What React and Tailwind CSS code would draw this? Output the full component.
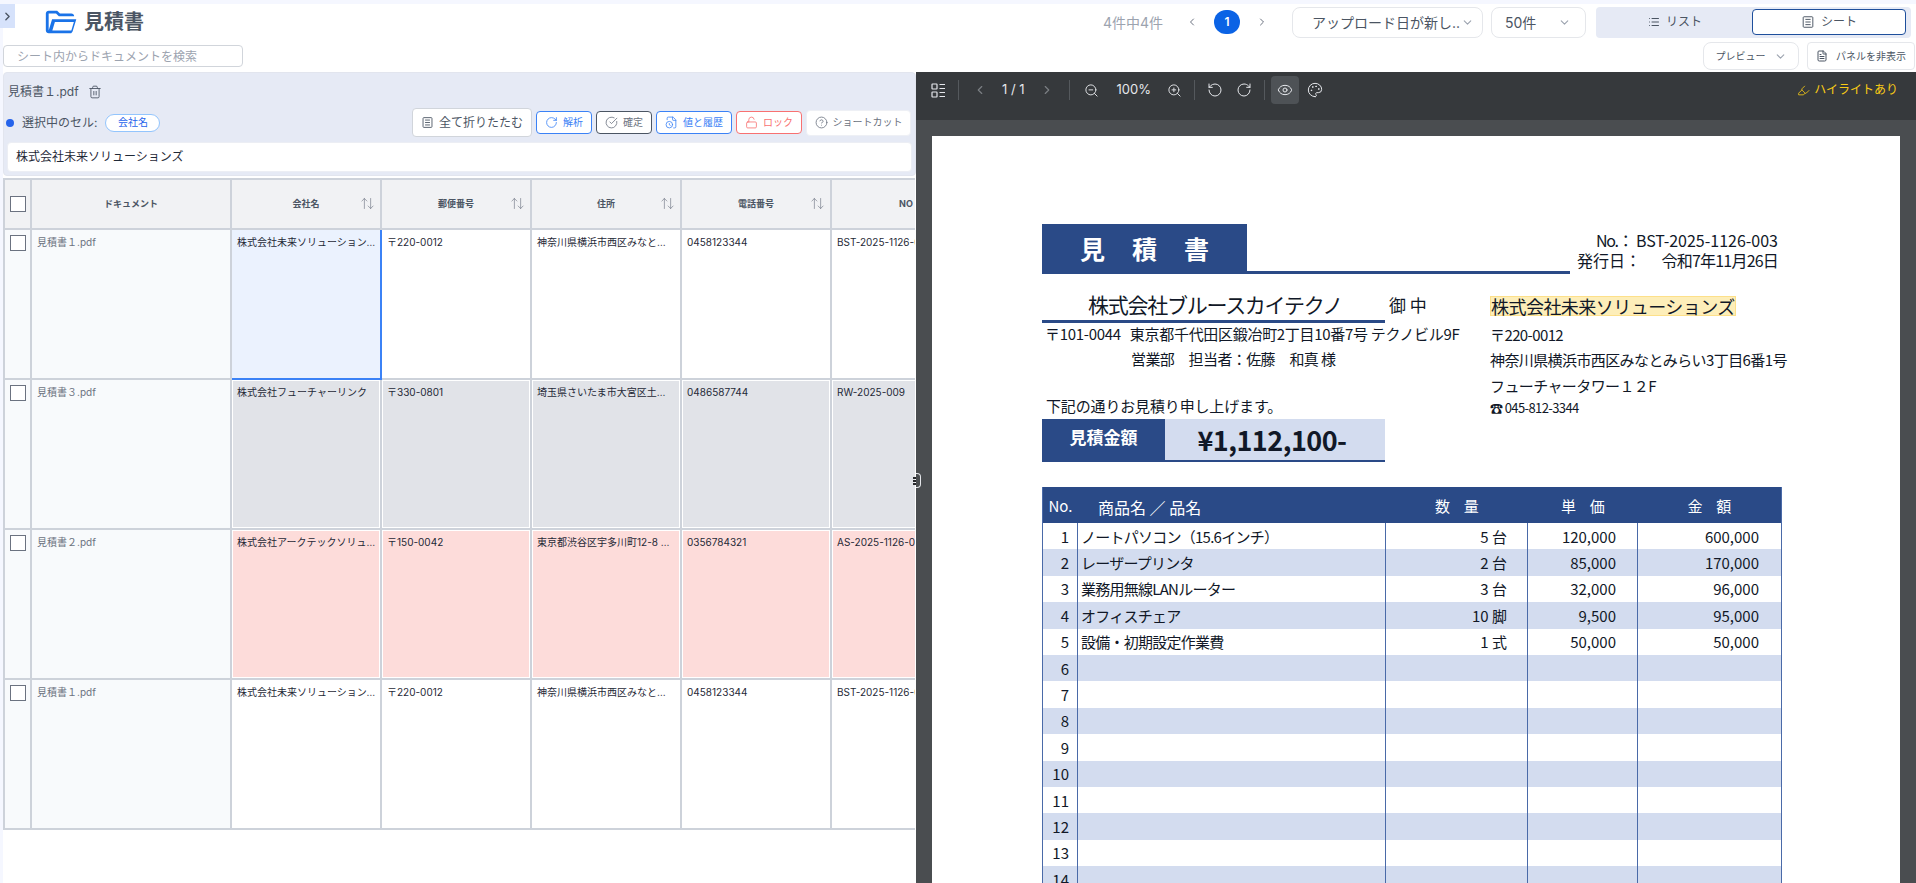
import React from 'react';
import {
  ArrowUpDown,
  ChevronDown,
  ChevronLeft,
  ChevronRight,
  CircleCheckBig,
  CircleHelp,
  Eye,
  FileClock,
  FileText,
  Highlighter,
  List,
  LockOpen,
  Palette,
  RotateCcw,
  RotateCw,
  Trash2,
  ZoomIn,
  ZoomOut,
} from 'lucide-react';

const columns = ['郵便番号', '住所', '電話番号'];

const rows = [
  {
    doc: '見積書１.pdf',
    cells: ['株式会社未来ソリューションズ', '〒220-0012', '神奈川県横浜市西区みなとみらい3丁目6番1号', '0458123344', 'BST-2025-1126-003'],
    bg: 'bg-white',
    selected: true,
  },
  {
    doc: '見積書３.pdf',
    cells: ['株式会社フューチャーリンク', '〒330-0801', '埼玉県さいたま市大宮区土呂町2丁目', '0486587744', 'RW-2025-009'],
    bg: 'bg-[#e1e3e8]',
  },
  {
    doc: '見積書２.pdf',
    cells: ['株式会社アークテックソリューションズ', '〒150-0042', '東京都渋谷区宇多川町12-8 アークビル', '0356784321', 'AS-2025-1126-001'],
    bg: 'bg-[#fddcda]',
  },
  {
    doc: '見積書１.pdf',
    cells: ['株式会社未来ソリューションズ', '〒220-0012', '神奈川県横浜市西区みなとみらい3丁目6番1号', '0458123344', 'BST-2025-1126-003'],
    bg: 'bg-white',
  },
];

const items = [
  ['1', 'ノートパソコン（15.6インチ）', '5 台', '120,000', '600,000'],
  ['2', 'レーザープリンタ', '2 台', '85,000', '170,000'],
  ['3', '業務用無線LANルーター', '3 台', '32,000', '96,000'],
  ['4', 'オフィスチェア', '10 脚', '9,500', '95,000'],
  ['5', '設備・初期設定作業費', '1 式', '50,000', '50,000'],
  ['6'], ['7'], ['8'], ['9'], ['10'], ['11'], ['12'], ['13'], ['14'],
];

function FolderLogo() {
  return (
    <svg width="34" height="34" viewBox="0 0 24 24" fill="#1a73e8" className="shrink-0">
      <path d="M4 20q-.825 0-1.412-.587T2 18V6q0-.825.588-1.412T4 4h6l2 2h8q.825 0 1.413.588T22 8H11.175l-2-2H4v12l2.400-8h17.100l-2.575 8.575q-.2.65-.737 1.038T20 20H4Zm2.600-2H20l1.800-6H8.400l-1.800 6Z" />
    </svg>
  );
}

function SheetIcon({ className }) {
  return (
    <svg className={className} viewBox="0 0 16 16" fill="none" stroke="currentColor" strokeWidth="1.100">
      <rect x="2.500" y="2" width="11" height="12" rx="1" />
      <path d="M5 5h6M5 8h6M5 11h6" />
    </svg>
  );
}

function ThumbIcon() {
  return (
    <svg width="15" height="15" viewBox="0 0 15 15" fill="none" stroke="#e5e7eb" strokeWidth="1.200">
      <rect x="1" y="1" width="5" height="5" rx="0.500" />
      <rect x="1" y="9" width="5" height="5" rx="0.500" />
      <path d="M8.500 1.500H14M8.500 5.500H14M8.500 9.500H14M8.500 13.500H14" />
    </svg>
  );
}

function Checkbox() {
  return <div className="h-4 w-4 border border-[#6b7280] bg-white" />;
}

function ActionButton({ icon: Icon, label, className }) {
  return (
    <button className={`flex h-[23px] items-center justify-center gap-[5px] rounded border bg-white text-[10px] ${className}`}>
      <Icon size={13} strokeWidth={1.500} />
      {label}
    </button>
  );
}

function TopBar() {
  return (
    <div className="flex h-[36px] items-center pl-[40px] pr-[5px]">
      <FolderLogo />
      <h1 className="ml-[7px] text-[20px] font-bold text-[#4b5563]">見積書</h1>
      <div className="ml-auto flex items-center">
        <span className="text-[14px] text-[#9ca3af]">4件中4件</span>
        <ChevronLeft size={12} className="ml-[23px] text-[#6b7280]" />
        <span className="ml-[16px] flex h-[24px] w-[26px] items-center justify-center rounded-full bg-[#0b63e5] text-[12px] font-semibold text-white">1</span>
        <ChevronRight size={12} className="ml-[16px] text-[#6b7280]" />
        <div className="ml-[24px] flex h-[31px] w-[191px] items-center justify-between rounded-lg border border-[#e5e7eb] pl-[19px] pr-[8px] text-[14px] text-[#4b5563]">
          <span>アップロード日が新し..</span>
          <ChevronDown size={13} className="text-[#9ca3af]" />
        </div>
        <div className="ml-[8px] flex h-[31px] w-[95px] items-center justify-between rounded-lg border border-[#e5e7eb] pl-[13px] pr-[14px] text-[14px] text-[#4b5563]">
          <span>50件</span>
          <ChevronDown size={13} className="text-[#9ca3af]" />
        </div>
        <div className="ml-[10px] flex h-[31px] w-[315px] items-center rounded bg-[#e6eaf5] pl-[2px] pr-[5px]">
          <div className="flex flex-1 items-center justify-center gap-[6px] text-[12px] text-[#4b5563]">
            <List size={12} />
            リスト
          </div>
          <div className="flex h-[26px] w-[154px] items-center justify-center gap-[6px] rounded border-[1.500px] border-[#1e4f9c] bg-white text-[12px] text-[#4b5563]">
            <SheetIcon className="h-[14px] w-[14px]" />
            シート
          </div>
        </div>
      </div>
    </div>
  );
}

function SubBar() {
  return (
    <div className="flex h-[32px] items-center pr-[1px]">
      <input
        className="h-[22px] w-[240px] rounded border border-[#d1d5db] pl-[13px] text-[12px] placeholder:text-[#9ca3af]"
        placeholder="シート内からドキュメントを検索"
      />
      <button className="ml-auto flex h-[28px] w-[96px] items-center justify-center gap-[8px] rounded-lg border border-[#e5e7eb] text-[10px] text-[#4b5563]">
        プレビュー
        <ChevronDown size={13} className="text-[#9ca3af]" />
      </button>
      <button className="ml-[8px] flex h-[28px] w-[108px] items-center justify-center gap-[8px] rounded border border-[#e5e7eb] text-[10px] text-[#4b5563]">
        <FileText size={12} />
        パネルを非表示
      </button>
    </div>
  );
}

function InfoCard() {
  return (
    <div className="h-[104px] rounded border border-[#e2e5ee] bg-[#e6eaf5]">
      <div className="flex h-[35px] items-center gap-[9px] pl-[4px] pt-[2px] text-[12px] text-[#4b5563]">
        見積書１.pdf
        <Trash2 size={14} strokeWidth={1.500} />
      </div>
      <div className="flex h-[29px] items-center pl-[2px] pr-[4px]">
        <span className="h-[8px] w-[8px] rounded-full bg-[#2563eb]" />
        <span className="ml-[8px] text-[12px] text-[#4b5563]">選択中のセル:</span>
        <span className="ml-[8px] flex h-[18px] w-[55px] items-center justify-center rounded-full border border-[#93c5fd] bg-white text-[10px] text-[#2563eb]">会社名</span>
        <button className="ml-auto flex h-[29px] w-[120px] items-center justify-center gap-[5px] rounded border border-[#d1d5db] bg-white text-[12px] text-[#4b5563]">
          <SheetIcon className="h-[13px] w-[13px]" />
          全て折りたたむ
        </button>
        <ActionButton icon={RotateCw} label="解析" className="ml-[4px] w-[56px] border-[#3b82f6] text-[#3b82f6]" />
        <ActionButton icon={CircleCheckBig} label="確定" className="ml-[4px] w-[56px] border-[#4b5563] text-[#6b7280]" />
        <ActionButton icon={FileClock} label="値と履歴" className="ml-[4px] w-[76px] border-[#3b82f6] text-[#3b82f6]" />
        <ActionButton icon={LockOpen} label="ロック" className="ml-[4px] w-[66px] border-[#f87171] text-[#f87171]" />
        <button className="ml-[4px] flex h-[26px] w-[105px] items-center justify-center gap-[5px] rounded border border-[#eef0f5] bg-white text-[10px] text-[#6b7280]">
          <CircleHelp size={13} strokeWidth={1.500} />
          ショートカット
        </button>
      </div>
      <div className="mx-[3px] mt-[5px] flex h-[30px] items-center rounded border border-[#eceef4] bg-white pl-[8px] text-[12px] text-[#1f2937]">
        株式会社未来ソリューションズ
      </div>
    </div>
  );
}

function HeaderCell({ label, sort, width }) {
  return (
    <div className={`relative flex shrink-0 items-center justify-center border-r-2 border-[#cdd2da] text-[9px] font-bold text-[#4b5563] ${width}`}>
      {label}
      {sort && <ArrowUpDown size={15} strokeWidth={1} className="absolute right-[5px] top-[16px] text-[#6b7280]" />}
    </div>
  );
}

function DataCell({ children, bg, selected, narrow }) {
  if (selected) {
    return (
      <div className="h-[150px] w-[150px] shrink-0 border-b-2 border-r-2 border-[#3b82f6] bg-[#ebf2fe]">
        <div className="truncate pl-[5px] pr-[4px] pt-[5px] text-[10px] text-[#1f2937]">{children}</div>
      </div>
    );
  }
  return (
    <div className="h-[150px] w-[150px] shrink-0 border-b-2 border-r-2 border-[#cdd2da] bg-white p-px">
      <div className={`h-full ${bg}`}>
        <div className={`truncate pl-[4px] pt-[4px] text-[10px] text-[#1f2937] ${narrow ? 'pr-[7px]' : 'pr-[3px]'}`}>{children}</div>
      </div>
    </div>
  );
}

function Sheet() {
  return (
    <div className="mt-[2px] w-[912px] overflow-hidden border-l-2 border-t-2 border-[#cdd2da]">
      <div className="flex h-[50px] border-b-2 border-[#cdd2da] bg-[#f1f2f4]">
        <div className="flex w-[27px] shrink-0 items-center justify-center border-r-2 border-[#cdd2da]">
          <Checkbox />
        </div>
        <HeaderCell label="ドキュメント" width="w-[200px]" />
        <HeaderCell label="会社名" sort width="w-[150px]" />
        {columns.map(c => (
          <HeaderCell key={c} label={c} sort width="w-[150px]" />
        ))}
        <HeaderCell label="NO" width="w-[150px]" />
      </div>
      {rows.map((row, i) => (
        <div key={i} className="flex h-[150px]">
          <div className="flex w-[27px] shrink-0 justify-center border-b-2 border-r-2 border-[#cdd2da] bg-[#f8fafc] pt-[5px]">
            <Checkbox />
          </div>
          <div className="w-[200px] shrink-0 truncate border-b-2 border-r-2 border-[#cdd2da] bg-[#f8fafc] pl-[5px] pt-[5px] text-[10px] text-[#6b7280]">
            {row.doc}
          </div>
          {row.cells.map((cell, j) => (
            <DataCell key={j} bg={row.bg} selected={row.selected && j === 0} narrow={j === 2}>
              {cell}
            </DataCell>
          ))}
        </div>
      ))}
    </div>
  );
}

function Toolbar() {
  return (
    <div className="flex h-[48px] shrink-0 items-start bg-[#36393c] pt-[4px] text-[#e5e7eb]">
      <div className="flex h-[28px] items-center">
        <div className="ml-[15px]"><ThumbIcon /></div>
        <span className="ml-[12px] h-[20px] w-px bg-[#55595d]" />
        <ChevronLeft size={14} className="ml-[14px] text-[#7b7f83]" />
        <span className="ml-[15px] text-[13px]">1 / 1</span>
        <ChevronRight size={14} className="ml-[15px] text-[#7b7f83]" />
        <span className="ml-[15px] h-[20px] w-px bg-[#55595d]" />
        <ZoomOut size={15} strokeWidth={1.500} className="ml-[14px]" />
        <span className="ml-[18px] text-[13px]">100%</span>
        <ZoomIn size={15} strokeWidth={1.500} className="ml-[16px]" />
        <span className="ml-[12px] h-[20px] w-px bg-[#55595d]" />
        <RotateCcw size={16} strokeWidth={1.500} className="ml-[12px]" />
        <RotateCw size={16} strokeWidth={1.500} className="ml-[13px]" />
        <span className="ml-[12px] h-[20px] w-px bg-[#55595d]" />
        <span className="ml-[6px] flex h-[28px] w-[28px] items-center justify-center rounded bg-[#4e5256]">
          <Eye size={16} strokeWidth={1.500} />
        </span>
        <Palette size={16} strokeWidth={1.500} className="ml-[8px]" />
      </div>
      <div className="ml-auto mr-[18px] flex h-[28px] items-center gap-[4px] text-[12px] text-[#facc15]">
        <Highlighter size={13} strokeWidth={1.500} />
        ハイライトあり
      </div>
    </div>
  );
}

function Quote() {
  return (
    <div className="h-[747px] overflow-hidden bg-white pl-[110px] pt-[88px] font-['Noto_Sans_CJK_JP',sans-serif] text-[#111827]">
      <div className="flex h-[50px] items-end">
        <div className="flex h-[50px] w-[205px] items-center justify-center bg-[#2a4a87] pl-[27px] text-[25px] font-bold tracking-[27px] text-white">見積書</div>
        <div className="h-[3px] w-[323px] bg-[#2a4a87]" />
        <div className="ml-[7px] w-[201px] whitespace-nowrap text-[16px] leading-[20px]">
          <div className="flex justify-between pl-[19px]"><span className="tracking-[-0.08em]">No.：</span><span>BST-2025-1126-003</span></div>
          <div className="mb-[4px] flex justify-between"><span>発行日：</span><span className="tracking-[-0.05em]">令和7年11月26日</span></div>
        </div>
      </div>
      <div className="flex">
        <div className="w-[448px]">
          <div className="flex">
            <div className="mt-[14px] h-[35px] w-[343px] border-b-[3px] border-[#2a4a87] pl-[46px] text-[21px] leading-[32px] tracking-[-0.06em]">株式会社ブルースカイテクノ</div>
            <div className="ml-[4px] mt-[18px] text-[17px]">御 中</div>
          </div>
          <div className="whitespace-nowrap pl-[3px] text-[15px] leading-[21px] tracking-[-0.02em]">〒101-0044 <span className="ml-[6px]">東京都千代田区鍛冶町2丁目10番7号 テクノビル9F</span></div>
          <div className="pl-[89px] text-[15px] leading-[29px] tracking-[-0.04em]">営業部　担当者：佐藤　和真 様</div>
          <div className="mt-[23px] pl-[4px] text-[15px] leading-[20px] tracking-[-0.01em]">下記の通りお見積り申し上げます。</div>
          <div className="mt-[3px] flex h-[43px] w-[343px]">
            <div className="flex h-full w-[123px] items-start justify-center bg-[#2a4a87] pt-[5px] text-[17px] font-bold text-white">見積金額</div>
            <div className="flex h-full w-[220px] items-center justify-center border-b-2 border-[#2a4a87] bg-[#d3dcef] pr-[6px] text-[27px] font-bold leading-none tracking-[-0.02em]">¥1,112,100-</div>
          </div>
        </div>
        <div className="pt-[22px] text-[15px] tracking-[-0.04em]">
          <div className="w-fit border border-[#fde08a] bg-[#fdeeb9] text-[18px] leading-[18px] tracking-[-0.03em]">株式会社未来ソリューションズ</div>
          <div className="mt-[7px] leading-[24px]">〒220-0012</div>
          <div className="whitespace-nowrap leading-[26px]">神奈川県横浜市西区みなとみらい3丁目6番1号</div>
          <div className="leading-[26px]">フューチャータワー１２F</div>
          <div className="text-[13px] leading-[18px]">☎ 045-812-3344</div>
        </div>
      </div>
      <div className="mt-[25px] w-[740px] border-x border-[#4a6aa8] text-[15px]">
        <div className="flex h-[36px] items-center bg-[#2a4a87] pt-[3px] text-white">
          <div className="w-[35px] text-center">No.</div>
          <div className="w-[308px] pl-[20px] text-[16px]">商品名 ／ 品名</div>
          <div className="w-[142px] pl-[5px] text-center tracking-[0.35em]">数 量</div>
          <div className="w-[110px] pl-[5px] text-center tracking-[0.35em]">単 価</div>
          <div className="flex-1 pl-[5px] text-center tracking-[0.35em]">金 額</div>
        </div>
        {items.map((r, i) => (
          <div key={r[0]} className={`flex h-[26.4px] items-center leading-none ${i % 2 ? 'bg-[#d3dcef]' : 'bg-white'}`}>
            <div className="flex h-full w-[35px] items-center justify-end border-r border-[#4a6aa8] pr-[8px]">{r[0]}</div>
            <div className="flex h-full w-[308px] items-center border-r border-[#4a6aa8] pl-[3px] tracking-[-0.05em]">{r[1]}</div>
            <div className="flex h-full w-[142px] items-center justify-end border-r border-[#4a6aa8] pr-[20px]">{r[2]}</div>
            <div className="flex h-full w-[110px] items-center justify-end border-r border-[#4a6aa8] pr-[21px]">{r[3]}</div>
            <div className="flex h-full flex-1 items-center justify-end pr-[22px]">{r[4]}</div>
          </div>
        ))}
      </div>
    </div>
  );
}

function ResizeGrip() {
  return (
    <div className="absolute left-[913px] top-[473px] flex h-[15px] w-[8px] items-center">
      <div className="flex flex-col gap-px">
        <span className="h-[2px] w-[3px] bg-[#27292c]" />
        <span className="h-[2px] w-[3px] bg-[#27292c]" />
        <span className="h-[2px] w-[3px] bg-[#27292c]" />
      </div>
      <div className="h-full w-[5px] rounded-r-sm border-y border-r border-[#e5e7eb]" />
    </div>
  );
}

export default function App() {
  return (
    <div className="relative h-[883px] overflow-hidden bg-[#f5f7ff] pl-[3px] pt-[4px] font-['Inter','Noto_Sans_CJK_JP',sans-serif]">
      <div className="absolute left-0 top-[4px] flex h-[24px] w-[15px] items-center justify-center bg-[#d6e2fb] text-[#4b5563]">
        <ChevronRight size={13} strokeWidth={2.500} />
      </div>
      <div className="flex h-[879px] flex-col bg-white">
        <TopBar />
        <SubBar />
        <div className="flex min-h-0 flex-1">
          <div className="w-[913px] shrink-0">
            <InfoCard />
            <Sheet />
          </div>
          <div className="flex min-w-0 flex-1 flex-col bg-[#4a4d50]">
            <Toolbar />
            <div className="px-[16px] pt-[16px]">
              <Quote />
            </div>
          </div>
        </div>
      </div>
      <ResizeGrip />
    </div>
  );
}
